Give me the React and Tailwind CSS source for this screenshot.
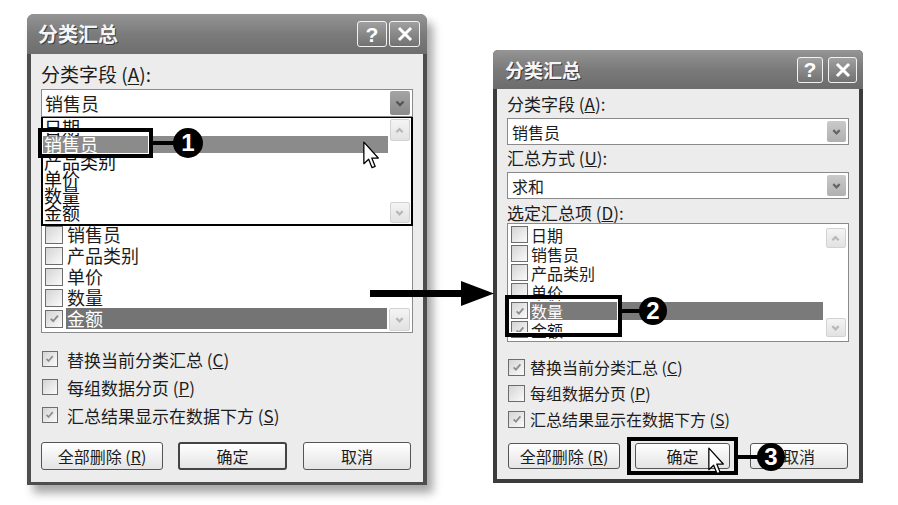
import React from "react";

const Chevron = ({ up, color, className }) => (
  <svg viewBox="0 0 12 12" className={className}>
    <path d={up ? "M2.5 8 L6 4.5 L9.5 8" : "M2.5 4.5 L6 8 L9.5 4.5"} fill="none" stroke={color} strokeWidth="2.4" />
  </svg>
);

const Tick = ({ className }) => (
  <svg viewBox="0 0 16 16" className={className}>
    <path d="M3.5 8.5 L6.5 11.5 L12.5 4.5" fill="none" stroke="#8d8d8d" strokeWidth="2.4" />
  </svg>
);

function CheckBox({ checked, size }) {
  return (
    <span className={`${size} shrink-0 border border-[#6c6c6c] bg-linear-to-br from-[#d4d4d4] to-[#fbfbfb] flex items-center justify-center`}>
      {checked && <Tick className="w-[80%] h-[80%]" />}
    </span>
  );
}

function TitleButtons({ helpSize, closeSize, gap }) {
  return (
    <div className={`flex ${gap}`}>
      <div className={`${helpSize} rounded-[3px] border-[1.5px] border-[#f2f2f2] bg-linear-to-b from-[#a0a0a0] to-[#727272] flex items-center justify-center font-['Liberation_Sans',sans-serif] font-bold text-[21px] text-white leading-none`}>
        ?
      </div>
      <div className={`${closeSize} rounded-[3px] border-[1.5px] border-[#f2f2f2] bg-linear-to-b from-[#a0a0a0] to-[#727272] flex items-center justify-center`}>
        <svg viewBox="0 0 16 16" className="w-[16px] h-[16px]">
          <path d="M3 3 L13 13 M13 3 L3 13" stroke="white" strokeWidth="3" strokeLinecap="square" />
        </svg>
      </div>
    </div>
  );
}

function ScrollBtn({ up, size }) {
  return (
    <div className={`${size} rounded-[2px] border border-[#d2d2d2] bg-linear-to-b from-[#f4f4f4] to-[#e2e2e2] flex items-center justify-center`}>
      <Chevron up={up} color="#b8b8b8" className="w-[11px] h-[11px]" />
    </div>
  );
}

function Cursor({ className }) {
  return (
    <svg viewBox="0 0 12 20" className={className}>
      <path d="M0.6 0.6 L0.6 15.8 L4 12.6 L6.4 18.6 L8.6 17.7 L6.2 11.8 L10.8 11.8 Z" fill="white" stroke="black" strokeWidth="0.9" strokeLinejoin="round" />
    </svg>
  );
}

const leftItems = ["日期", "销售员", "产品类别", "单价", "数量", "金额"];

function LeftDialog() {
  return (
    <div className="absolute left-[27px] top-[14px] w-[400px] h-[471px] flex flex-col rounded-t-[7px] bg-[#4e4e4e] shadow-[6px_8px_10px_rgba(0,0,0,0.35)]">
      <div className="h-[40px] shrink-0 flex items-center pl-[11px] pr-[7px] rounded-t-[7px] bg-linear-to-b from-[#959595] via-[#7b7b7b] to-[#6e6e6e]">
        <span className="flex-1 text-[20px] font-bold text-[#f5f5f5] leading-none [text-shadow:1px_1px_0_#3a3a3a]">分类汇总</span>
        <TitleButtons helpSize="w-[30px] h-[26px]" closeSize="w-[31px] h-[26px]" gap="gap-[2px]" />
      </div>

      <div className="flex-1 mx-[4px] mb-[3px] bg-[#ececec] px-[10px] pt-[8px] flex flex-col text-[#1c1c1c]">
        <div className="text-[19px] leading-[24px] h-[24px]">分类字段 (<u className="underline-offset-2">A</u>):</div>
        <div className="mt-[3px] h-[28px] border border-[#8a8a8a] bg-white flex items-center pl-[3px] pr-[2px]">
          <span className="flex-1 text-[18px] leading-none">销售员</span>
          <div className="w-[20px] h-[24px] rounded-[2px] bg-linear-to-b from-[#a4a4a4] to-[#8a8a8a] flex items-center justify-center">
            <Chevron color="#555" className="w-[12px] h-[12px]" />
          </div>
        </div>

        <div className="mt-[4px] text-[19px] leading-[24px] h-[24px]">汇总方式 (<u>U</u>):</div>
        <div className="mt-[2px] h-[28px] border border-[#8a8a8a] bg-white flex items-center pl-[3px] pr-[2px]">
          <span className="flex-1 text-[18px] leading-none">求和</span>
        </div>
        <div className="mt-[3px] text-[19px] leading-[24px] h-[24px]">选定汇总项 (<u>D</u>):</div>

        <div className="h-[131px] border border-[#8a8a8a] bg-white flex">
          <div className="flex-1 pt-[0px] overflow-hidden">
            {leftItems.map((t) => (
              <div key={t} className="h-[21px] flex items-center pl-[3px]">
                <CheckBox size="w-[18px] h-[18px]" checked={t === "金额"} />
                <span className={`ml-[3px] h-[21px] flex-1 pl-[1px] text-[18px] leading-[21px] ${t === "金额" ? "bg-[#747474] text-white" : ""}`}>{t}</span>
              </div>
            ))}
          </div>
          <div className="w-[25px] flex flex-col justify-between items-center py-[1px]">
            <ScrollBtn up size="w-[21px] h-[22px]" />
            <ScrollBtn size="w-[21px] h-[23px]" />
          </div>
        </div>

        <div className="mt-[12px] flex flex-col text-[17px]">
          {[
            ["替换当前分类汇总 (", "C", ")", true],
            ["每组数据分页 (", "P", ")", false],
            ["汇总结果显示在数据下方 (", "S", ")", true],
          ].map(([a, k, b, c]) => (
            <div key={a} className="h-[28px] flex items-center pl-[1px]">
              <CheckBox size="w-[16px] h-[16px]" checked={c} />
              <span className="ml-[9px] leading-none">{a}<u>{k}</u>{b}</span>
            </div>
          ))}
        </div>

        <div className="mt-[13px] flex text-[16px]">
          <div className="w-[122px] h-[28px] rounded-[3px] border border-[#555] bg-linear-to-b from-white to-[#e4e4e4] flex items-center justify-center">全部删除 (<u>R</u>)</div>
          <div className="ml-[15px] w-[109px] h-[28px] rounded-[3px] border-2 border-[#444] bg-linear-to-b from-white to-[#e4e4e4] flex items-center justify-center">确定</div>
          <div className="ml-[16px] w-[108px] h-[28px] rounded-[3px] border border-[#555] bg-linear-to-b from-white to-[#e4e4e4] flex items-center justify-center">取消</div>
        </div>
      </div>

      <div className="absolute left-[14px] top-[103px] w-[372px] h-[109px] bg-white border-x-2 border-b-2 border-t border-black flex text-[#111]">
        <div className="flex-1 pt-[1px] overflow-hidden">
          {leftItems.map((t) => (
            <div key={t} className={`h-[17px] leading-[17px] text-[18px] pl-[1px] ${t === "销售员" ? "bg-[#8b8b8b] text-white" : ""}`}>{t}</div>
          ))}
        </div>
        <div className="w-[23px] flex flex-col justify-between items-center py-[1px]">
          <ScrollBtn up size="w-[20px] h-[22px]" />
          <ScrollBtn size="w-[20px] h-[21px]" />
        </div>
      </div>
    </div>
  );
}

const rightItems = ["日期", "销售员", "产品类别", "单价", "数量", "金额"];

function RightDialog() {
  return (
    <div className="absolute left-[493px] top-[50px] w-[370px] h-[433px] flex flex-col rounded-t-[5px] bg-[#3c3c3c]">
      <div className="h-[39px] shrink-0 flex items-center pl-[12px] pr-[6px] rounded-t-[5px] bg-linear-to-b from-[#959595] via-[#7a7a7a] to-[#6c6c6c]">
        <span className="flex-1 text-[19px] font-bold text-[#f5f5f5] leading-none [text-shadow:1px_1px_0_#3a3a3a]">分类汇总</span>
        <TitleButtons helpSize="w-[26px] h-[26px]" closeSize="w-[29px] h-[26px]" gap="gap-[5px]" />
      </div>

      <div className="flex-1 mx-[4px] mb-[4px] bg-[#ececec] px-[10px] pt-[4px] flex flex-col text-[#1c1c1c]">
        <div className="text-[17px] leading-[22px] h-[22px]">分类字段 (<u>A</u>):</div>
        <div className="mt-[3px] h-[27px] border border-[#8a8a8a] bg-white flex items-center pl-[4px] pr-[2px]">
          <span className="flex-1 text-[16px] leading-none">销售员</span>
          <div className="w-[19px] h-[21px] rounded-[2px] bg-linear-to-b from-[#cacaca] to-[#b0b0b0] flex items-center justify-center">
            <Chevron color="#666" className="w-[11px] h-[11px]" />
          </div>
        </div>
        <div className="mt-[2px] text-[17px] leading-[22px] h-[22px]">汇总方式 (<u>U</u>):</div>
        <div className="mt-[3px] h-[27px] border border-[#8a8a8a] bg-white flex items-center pl-[4px] pr-[2px]">
          <span className="flex-1 text-[16px] leading-none">求和</span>
          <div className="w-[19px] h-[21px] rounded-[2px] bg-linear-to-b from-[#cacaca] to-[#b0b0b0] flex items-center justify-center">
            <Chevron color="#666" className="w-[11px] h-[11px]" />
          </div>
        </div>
        <div className="mt-[4px] text-[17px] leading-[20px] h-[20px]">选定汇总项 (<u>D</u>):</div>

        <div className="h-[119px] border border-[#8a8a8a] bg-white flex">
          <div className="flex-1 pt-[1px] overflow-hidden">
            {rightItems.map((t) => (
              <div key={t} className="h-[19px] flex items-center pl-[3px]">
                <CheckBox size="w-[17px] h-[17px]" checked={t === "数量" || t === "金额"} />
                <span className={`ml-[2px] h-[18px] flex-1 pl-[1px] text-[16px] leading-[18px] ${t === "数量" ? "bg-[#7a7a7a] text-white" : ""}`}>{t}</span>
              </div>
            ))}
          </div>
          <div className="w-[25px] flex flex-col justify-between items-center py-[4px]">
            <ScrollBtn up size="w-[20px] h-[20px]" />
            <ScrollBtn size="w-[20px] h-[19px]" />
          </div>
        </div>

        <div className="mt-[12px] flex flex-col text-[16px]">
          {[
            ["替换当前分类汇总 (", "C", ")", true],
            ["每组数据分页 (", "P", ")", false],
            ["汇总结果显示在数据下方 (", "S", ")", true],
          ].map(([a, k, b, c]) => (
            <div key={a} className="h-[26px] flex items-center pl-[1px]">
              <CheckBox size="w-[17px] h-[17px]" checked={c} />
              <span className="ml-[5px] leading-none">{a}<u>{k}</u>{b}</span>
            </div>
          ))}
        </div>

        <div className="mt-[11px] flex text-[16px]">
          <div className="ml-[1px] w-[112px] h-[26px] rounded-[3px] border border-[#555] bg-linear-to-b from-white to-[#e4e4e4] flex items-center justify-center">全部删除 (<u>R</u>)</div>
          <div className="ml-[15px] w-[95px] h-[26px] rounded-[3px] border border-[#555] bg-linear-to-b from-white to-[#e4e4e4] flex items-center justify-center">确定</div>
          <div className="ml-[20px] w-[98px] h-[26px] rounded-[3px] border border-[#555] bg-linear-to-b from-white to-[#e4e4e4] flex items-center justify-center">取消</div>
        </div>
      </div>
    </div>
  );
}

function Badge({ n, className }) {
  return (
    <div className={`absolute rounded-full bg-black text-white flex items-center justify-center font-['Liberation_Sans',sans-serif] font-bold text-[24px] leading-none ${className}`}>
      {n}
    </div>
  );
}

export default function App() {
  return (
    <div className="relative w-[898px] h-[505px] bg-white overflow-hidden font-['Noto_Sans_CJK_SC','Noto_Sans_CJK_JP',sans-serif]">
      <LeftDialog />
      <RightDialog />

      {/* arrow between dialogs */}
      <div className="absolute left-[370px] top-[290px] w-[94px] h-[7px] bg-black" />
      <svg className="absolute left-[461px] top-[281px] w-[33px] h-[25px]" viewBox="0 0 33 25">
        <polygon points="0,0 33,12.5 0,25" fill="black" />
      </svg>

      {/* callout 1 */}
      <div className="absolute left-[38px] top-[128px] w-[115px] h-[30px] border-[4px] border-black shadow-[inset_0_0_0_1px_white]" />
      <div className="absolute left-[153px] top-[141px] w-[22px] h-[4px] bg-black" />
      <Badge n="1" className="left-[173px] top-[128px] w-[30px] h-[30px]" />
      <Cursor className="absolute left-[363px] top-[141px] w-[17px] h-[29px]" />

      {/* callout 2 */}
      <div className="absolute left-[505px] top-[295px] w-[117px] h-[42px] border-[4px] border-black shadow-[inset_0_0_0_1px_white]" />
      <div className="absolute left-[622px] top-[309px] w-[19px] h-[4px] bg-black" />
      <Badge n="2" className="left-[639px] top-[297px] w-[28px] h-[28px]" />

      {/* callout 3 */}
      <div className="absolute left-[627px] top-[437px] w-[111px] h-[38px] border-[4px] border-black" />
      <div className="absolute left-[738px] top-[455px] w-[21px] h-[4px] bg-black" />
      <Badge n="3" className="left-[757px] top-[443px] w-[28px] h-[28px]" />
      <Cursor className="absolute left-[708px] top-[447px] w-[17px] h-[29px]" />
    </div>
  );
}
